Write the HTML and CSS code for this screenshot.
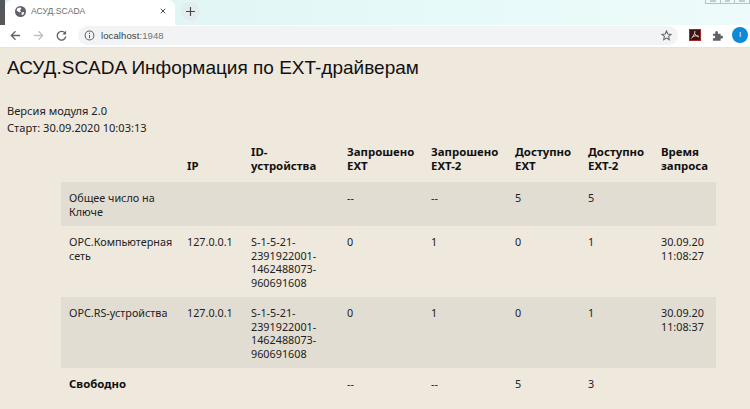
FILE: index.html
```html
<!DOCTYPE html>
<html lang="ru">
<head>
<meta charset="utf-8">
<title>АСУД.SCADA</title>
<link rel="stylesheet" href="styles.css">
</head>
<body>
<header class="chrome">
  <div class="tabstrip">
    <div class="tab">
      <svg class="favicon" viewBox="0 0 12 12"><circle cx="6" cy="6" r="6" fill="#5f6368"/><path d="M3 2.2 6 1.6 7 3 5.4 4.6 6.6 6 5 7.2 3.4 6 1.6 4.6Z M7.5 6.8 10 6.6 9.4 9 7.6 10.2 7 8.4Z" fill="#fff"/></svg>
      <span class="tabtitle">АСУД.SCADA</span>
      <svg class="tabclose" viewBox="0 0 8 8"><path d="M1 1 7 7M7 1 1 7" stroke="#45484c" stroke-width="1.3"/></svg>
    </div>
    <div class="newtab"><svg viewBox="0 0 10 10"><path d="M5 0V10M0 5H10" stroke="#45484c" stroke-width="1.3"/></svg></div>
    <div class="wincontrols"><span></span><span></span><span></span></div>
  </div>
  <div class="toolbar">
    <svg class="navicon" viewBox="0 0 12 12"><path d="M11 6H1.6M6 1.4 1.4 6 6 10.6" fill="none" stroke="#5f6368" stroke-width="1.4"/></svg>
    <svg class="navicon" viewBox="0 0 12 12"><path d="M1 6H10.4M6 1.4 10.6 6 6 10.6" fill="none" stroke="#bcc0c4" stroke-width="1.4"/></svg>
    <svg class="navicon" viewBox="0 0 12 12"><path d="M10.2 4A4.7 4.7 0 1 0 10.7 7" fill="none" stroke="#5f6368" stroke-width="1.4"/><path d="M11 .8V4.8H7Z" fill="#5f6368"/></svg>
    <div class="omnibox">
      <svg class="infoicon" viewBox="0 0 12 12"><circle cx="6" cy="6" r="4.8" fill="none" stroke="#5f6368" stroke-width="1.1"/><path d="M6 5.4V9M6 3V4.3" stroke="#5f6368" stroke-width="1.1"/></svg>
      <span class="url">localhost<span class="port">:1948</span></span>
      <svg class="star" viewBox="0 0 12 12"><path d="M6 1 7.4 4.4 11 4.7 8.3 7 9.1 10.6 6 8.7 2.9 10.6 3.7 7 1 4.7 4.6 4.4Z" fill="none" stroke="#5f6368" stroke-width="1.1"/></svg>
    </div>
    <svg class="pdficon" viewBox="0 0 12 12"><rect width="12" height="12" fill="#a02a20"/><rect x="1" y="1" width="10" height="10" fill="#3a1414"/><path d="M6 2C5.6 5 4.4 7.6 2.2 9.6M6 4.6C6.6 6.6 8 7.6 10 8M3.6 7.6C5.4 6.8 7.6 6.6 9.6 7" fill="none" stroke="#f4dcd8" stroke-width=".9"/></svg>
    <svg class="puzzle" viewBox="0 0 12 12"><path d="M1 4H3.6C3.2 2.4 3.8 1 5 1S6.8 2.4 6.4 4H9.4V6.4C11 6 12 6.6 12 7.8S11 9.6 9.4 9.2V11.6H1V9C2.6 9.4 3.4 8.6 3.4 7.6S2.6 6 1 6.4Z" fill="#5f6368"/></svg>
    <div class="avatar">I</div>
  </div>
</header>
<main class="page">
  <h1 class="title">АСУД.SCADA Информация по EXT-драйверам</h1>
  <p class="meta">Версия модуля 2.0</p>
  <p class="meta">Старт: 30.09.2020 10:03:13</p>
  <table class="drivers">
    <colgroup>
      <col class="c1"><col class="c2"><col class="c3"><col class="c4"><col class="c5"><col class="c6"><col class="c7"><col class="c8">
    </colgroup>
    <thead>
      <tr>
        <th></th><th>IP</th><th>ID-устройства</th><th>Запрошено EXT</th><th>Запрошено EXT-2</th><th>Доступно EXT</th><th>Доступно EXT-2</th><th>Время запроса</th>
      </tr>
    </thead>
    <tbody>
      <tr class="shade">
        <td>Общее число на Ключе</td><td></td><td></td><td>--</td><td>--</td><td>5</td><td>5</td><td></td>
      </tr>
      <tr>
        <td>OPC.Компьютерная сеть</td><td>127.0.0.1</td><td>S-1-5-21-2391922001-1462488073-960691608</td><td>0</td><td>1</td><td>0</td><td>1</td><td>30.09.20 11:08:27</td>
      </tr>
      <tr class="shade">
        <td>OPC.RS-устройства</td><td>127.0.0.1</td><td>S-1-5-21-2391922001-1462488073-960691608</td><td>0</td><td>1</td><td>0</td><td>1</td><td>30.09.20 11:08:37</td>
      </tr>
      <tr>
        <td class="strong">Свободно</td><td></td><td></td><td>--</td><td>--</td><td>5</td><td>3</td><td></td>
      </tr>
    </tbody>
  </table>
</main>
</body>
</html>
```
FILE: styles.css
```css
* { box-sizing: border-box; }
html, body { margin: 0; padding: 0; }
body {
  width: 750px;
  height: 409px;
  overflow: hidden;
  background: #efe8dd;
  font-family: "Noto Sans", "Open Sans", sans-serif;
  color: #222;
}
.chrome { height: 48px; background: #fff; border-bottom: 1px solid #e4e4e4; }
.tabstrip {
  height: 25px;
  display: flex;
  align-items: flex-start;
  background: linear-gradient(90deg, #dff2f2 0%, #e6faf9 60%, #eefbfa 100%);
  border-left: 5px solid #55585a;
}
.tab {
  width: 170px;
  height: 25px;
  background: #fff;
  border-radius: 7px 7px 0 0;
  display: flex;
  align-items: center;
  padding: 0 0 3px 10px;
}
.favicon { width: 11px; height: 11px; }
.tabtitle { margin-left: 5px; font: 8.6px "Liberation Sans", sans-serif; color: #6b6e72; flex: 1; }
.tabclose { width: 6px; height: 6px; margin-right: 9px; }
.newtab {
  width: 19px;
  height: 19px;
  margin: 2px 0 0 6px;
  border-radius: 50%;
  background: #e4eded;
  display: flex;
  align-items: center;
  justify-content: center;
}
.newtab svg { width: 9px; height: 9px; }
.wincontrols {
  display: flex;
  height: 4px;
  margin-left: auto;
  width: 45px;
  border-left: 1px solid #b8c2c2;
}
.wincontrols span {
  width: 19px;
  height: 4px;
  padding: 0 4px;
  border-right: 1px solid #b8c2c2;
  border-bottom: 1px solid #b8c2c2;
  background: linear-gradient(#c8cccc 0 2px, transparent 2px) content-box;
}
.toolbar {
  height: 20px;
  display: flex;
  align-items: center;
  padding-left: 10px;
}
.navicon { width: 11px; height: 11px; margin-right: 12px; }
.navicon:nth-child(3) { margin-right: 11px; }
.omnibox {
  width: 600px;
  height: 19px;
  background: #f1f3f4;
  border-radius: 10px;
  display: flex;
  align-items: center;
  padding: 0 6px 0 6px;
}
.infoicon { width: 11px; height: 11px; }
.url { margin-left: 6px; font: 9.5px "Liberation Sans", sans-serif; color: #3c4043; flex: 1; letter-spacing: .1px; }
.port { color: #70757a; }
.star { width: 11px; height: 11px; }
.pdficon { width: 12px; height: 12px; margin-left: 11px; }
.puzzle { width: 11px; height: 11px; margin-left: 11px; }
.avatar {
  width: 16px;
  height: 16px;
  margin-left: 9px;
  border-radius: 50%;
  background: #0a8ad8;
  color: #fff;
  font: 8px/16px "Liberation Sans", sans-serif;
  text-align: center;
}
.page { padding: 0 0 0 7px; }
.title {
  margin: 8px 0 22px;
  font: 400 19px/24px "Liberation Sans", sans-serif;
  color: #111;
}
.meta { margin: 0; font-size: 11.1px; line-height: 17px; }
.drivers {
  table-layout: fixed;
  border-collapse: collapse;
  width: 655px;
  margin: 4px 0 0 54px;
  font-size: 10.8px;
  line-height: 13.5px;
}
.c1 { width: 118px; } .c2 { width: 64px; } .c3 { width: 96px; } .c4 { width: 84px; }
.c5 { width: 84px; } .c6 { width: 73px; } .c7 { width: 73px; } .c8 { width: 63px; }
.drivers th {
  padding: 5px 8px 10px;
  text-align: left;
  vertical-align: bottom;
  font-size: 11.4px;
  font-weight: 700;
  color: #111;
}
.drivers td { padding: 9px 8px 8px; vertical-align: top; }
.shade td { background: #e2ddd2; }
.drivers .strong { font-size: 11.4px; font-weight: 700; color: #111; }
```
